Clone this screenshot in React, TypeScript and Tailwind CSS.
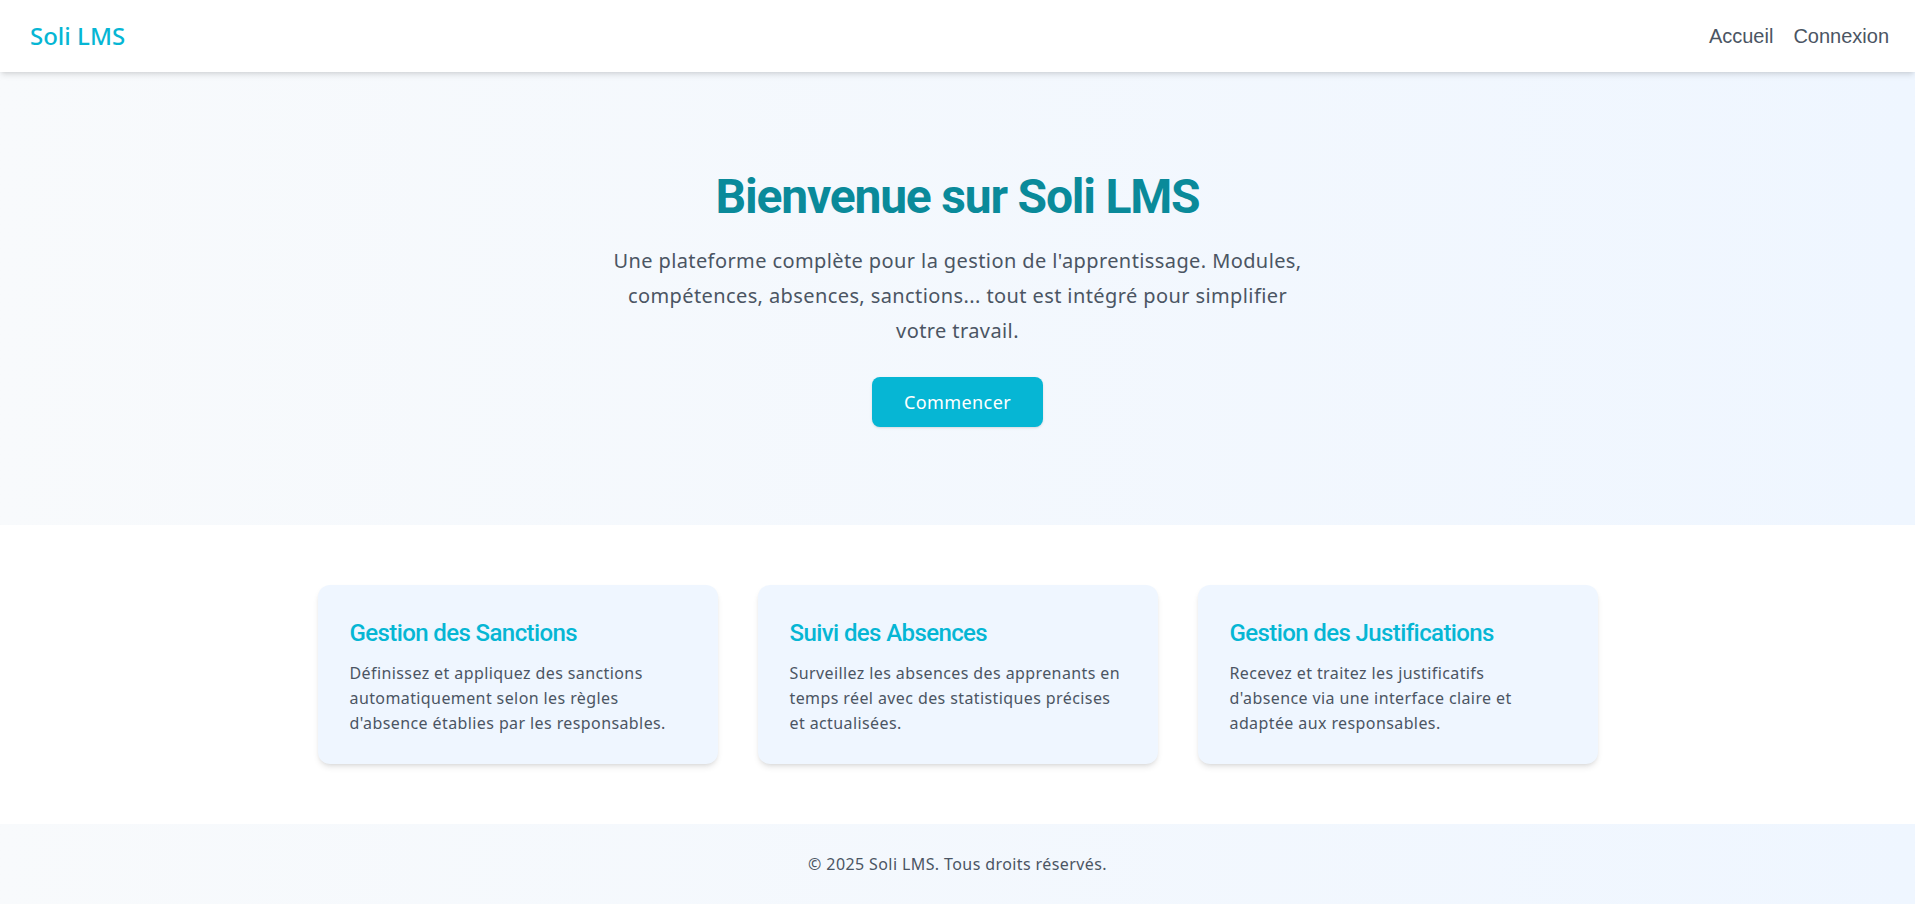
import React from "react";

const features = [
  {
    title: "Gestion des Sanctions",
    text: "Définissez et appliquez des sanctions automatiquement selon les règles d'absence établies par les responsables.",
  },
  {
    title: "Suivi des Absences",
    text: "Surveillez les absences des apprenants en temps réel avec des statistiques précises et actualisées.",
  },
  {
    title: "Gestion des Justifications",
    text: "Recevez et traitez les justificatifs d'absence via une interface claire et adaptée aux responsables.",
  },
];

const App = () => {
  return (
    <div className="min-h-screen flex flex-col bg-white font-['Noto_Sans',_'Open_Sans',_sans-serif] tracking-[0.025em]">
      {/* barre de navigation */}
      <header className="relative z-10 h-[72px] flex items-center justify-between pl-[30px] pr-[26px] bg-white shadow-md">
        <span className="text-2xl font-medium tracking-normal text-[#06b6d4]">Soli LMS</span>
        <nav className="flex items-center gap-5 font-['Liberation_Sans',_Arial,_sans-serif] text-xl tracking-normal text-[#4b5563]">
          <a href="#">Accueil</a>
          <a href="#">Connexion</a>
        </nav>
      </header>

      {/* section hero */}
      <section className="bg-linear-to-r from-[#f8fafc] to-[#eff6ff] pt-[99px] pb-[98px] text-center">
        <h1 className="font-['Roboto',_sans-serif] text-5xl leading-[52px] font-bold tracking-tight text-[#0a8a9a]">
          Bienvenue sur Soli LMS
        </h1>
        <p className="mx-auto mt-5 max-w-[700px] text-xl leading-[35px] text-[#4b5563]">
          Une plateforme complète pour la gestion de l'apprentissage. Modules, compétences, absences, sanctions... tout est intégré pour simplifier votre travail.
        </p>
        <button className="mt-[29px] rounded-lg bg-[#06b6d4] px-8 py-[11px] text-lg leading-7 text-white shadow-sm">
          Commencer
        </button>
      </section>

      {/* fonctionnalités */}
      <section className="py-[60px]">
        <div className="mx-auto grid max-w-7xl grid-cols-3 gap-10">
          {features.map((f) => (
            <div key={f.title} className="rounded-xl bg-[#eff6ff] p-8 pb-7 shadow-md">
              <h2 className="font-['Roboto',_sans-serif] text-2xl leading-8 font-medium tracking-tight text-[#06b6d4]">
                {f.title}
              </h2>
              <p className="mt-3 text-base leading-[25px] text-[#4b5563]">{f.text}</p>
            </div>
          ))}
        </div>
      </section>

      <footer className="bg-linear-to-r from-[#f8fafc] to-[#eff6ff] py-7 text-center text-base leading-6 text-[#4b5563]">
        © 2025 Soli LMS. Tous droits réservés.
      </footer>
    </div>
  );
};

export default App;
